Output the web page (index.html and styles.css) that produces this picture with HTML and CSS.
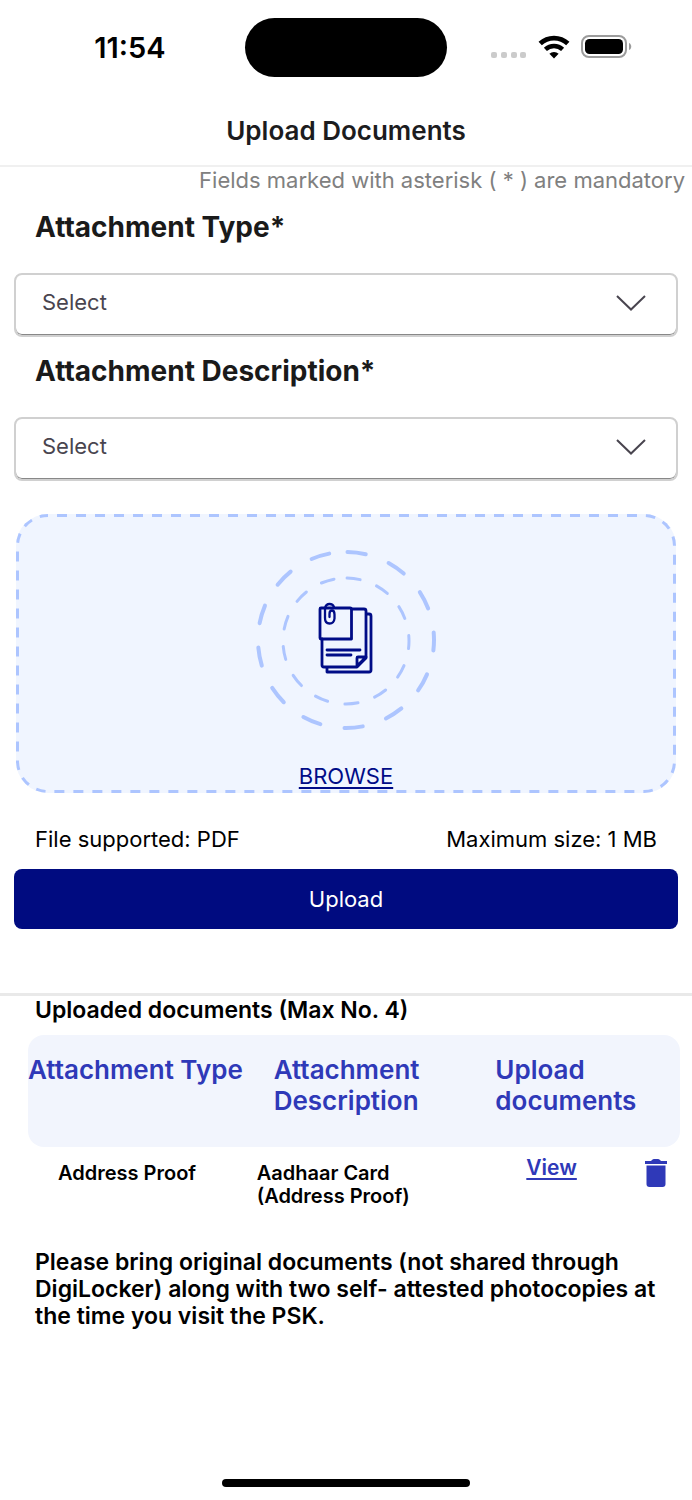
FILE: index.html
```
<!DOCTYPE html>
<html lang="en">
<head>
    <meta charset="UTF-8">
    <meta name="viewport" content="width=device-width, initial-scale=1.0">
    <title>Upload Documents</title>
    <link rel="stylesheet" href="styles.css">
</head>
<body>
    <div class="status-bar">
        <div class="time">11:54</div>
        <div class="island"></div>
        <div class="status-icons">
            <svg class="signal" width="36" height="24" viewBox="0 0 36 24" fill="#cbcbcb">
                <rect x="0" y="17" width="6" height="6" rx="2"/>
                <rect x="10" y="17" width="6" height="6" rx="2"/>
                <rect x="20" y="17" width="6" height="6" rx="2"/>
                <rect x="29" y="17" width="6" height="6" rx="2"/>
            </svg>
            <svg class="wifi" width="32" height="24" viewBox="0 0 32 24">
                <path d="M2.2 8.6a20 20 0 0 1 27.6 0" fill="none" stroke="#000" stroke-width="4.8"/>
                <path d="M7.4 14.4a12.4 12.4 0 0 1 17.2 0" fill="none" stroke="#000" stroke-width="4.4"/>
                <path d="M16 23.4l-4.6-4.6a6.6 6.6 0 0 1 9.2 0z" fill="#000"/>
            </svg>
            <svg class="battery" width="52" height="24" viewBox="0 0 52 24">
                <rect x="1" y="1" width="44" height="21" rx="7" fill="none" stroke="#9c9c9c" stroke-width="2"/>
                <rect x="4" y="4" width="38" height="15" rx="4.500" fill="#000"/>
                <path d="M48 8c3 1 3 6 0 7z" fill="#9c9c9c"/>
            </svg>
        </div>
    </div>

    <header class="header">
        <h1>Upload Documents</h1>
    </header>

    <main>
        <p class="mandatory">Fields marked with asterisk ( * ) are mandatory</p>

        <form class="upload-form">
            <label class="field-label" for="attachmentType">Attachment Type*</label>
            <div class="select-wrap">
                <select id="attachmentType">
                    <option>Select</option>
                </select>
                <svg class="chevron" width="32" height="18" viewBox="0 0 32 18"><path d="M2 2l14 13.500 14-13.500"/></svg>
            </div>

            <label class="field-label" for="attachmentDescription">Attachment Description*</label>
            <div class="select-wrap">
                <select id="attachmentDescription">
                    <option>Select</option>
                </select>
                <svg class="chevron" width="32" height="18" viewBox="0 0 32 18"><path d="M2 2l14 13.500 14-13.500"/></svg>
            </div>

            <div class="dropzone">
                <svg class="dropzone-border" width="100%" height="100%">
                    <rect x="0" y="0" width="100%" height="100%" rx="32"/>
                </svg>
                <svg class="files-icon" width="184" height="184" viewBox="0 0 184 184" fill="none">
                    <g stroke="#adc5ff" stroke-linecap="round">
                        <circle cx="92" cy="92" r="88" pathLength="360" stroke-width="4" stroke-dasharray="12 16" stroke-dashoffset="-1" transform="rotate(-90 92 92)"/>
                        <circle cx="92" cy="93" r="63" pathLength="360" stroke-width="3" stroke-dasharray="12 16" stroke-dashoffset="-1" transform="rotate(-90 92 93)"/>
                    </g>
                    <g stroke="#000c87" stroke-width="2.800" stroke-linecap="round" stroke-linejoin="round">
                        <path d="M98 61h12q2 0 2 2v47l-9 9H70q-2 0-2-2V91"/>
                        <path d="M67 60h29q1.500 0 1.500 2v29H67q-1 0-1-1V61q0-1 1-1z"/>
                        <path d="M113 66h2q2 0 2 2v54q0 2-2 2H73v-4"/>
                        <path d="M103 118v-8q0-1 1-1h8z"/>
                        <path d="M73 102h33M73 107h24"/>
                        <path stroke-width="2.300" d="M80 59q-1-3-4.500-3t-4.500 4v10q0 5.500 4.500 5.500t5-5v-4q0-4-2.500-4t-2.500 3.500v3"/>
                    </g>
                </svg>
                <input class="file-input" type="file" id="file" accept="application/pdf">
                <label class="browse" for="file">BROWSE</label>
            </div>

            <div class="file-info">
                <span>File supported: PDF</span>
                <span>Maximum size: 1 MB</span>
            </div>

            <button class="upload-btn" type="button">Upload</button>
        </form>

        <section class="uploaded">
            <h2>Uploaded documents (Max No. 4)</h2>
            <table>
                <colgroup>
                    <col class="col-type">
                    <col class="col-desc">
                    <col class="col-view">
                    <col class="col-delete">
                </colgroup>
                <thead>
                    <tr>
                        <th>Attachment Type</th>
                        <th>Attachment Description</th>
                        <th colspan="2">Upload documents</th>
                    </tr>
                </thead>
                <tbody>
                    <tr>
                        <td class="doc-type">Address Proof</td>
                        <td class="doc-desc">Aadhaar Card (Address Proof)</td>
                        <td class="doc-view"><a href="#">View</a></td>
                        <td class="doc-delete">
                            <button type="button" aria-label="Delete">
                                <svg width="22" height="28" viewBox="0 0 22 28" fill="#2f39b8">
                                    <path d="M0 2h6l1-1q1-1 2-1h4q1 0 2 1l1 1h6v3H0z"/>
                                    <path d="M1.500 6.500h19V25q0 3-3 3h-13q-3 0-3-3z"/>
                                </svg>
                            </button>
                        </td>
                    </tr>
                </tbody>
            </table>
            <p class="note">Please bring original documents (not shared through DigiLocker) along with two self- attested photocopies at the time you visit the PSK.</p>
        </section>
    </main>

    <div class="home-indicator"></div>
</body>
</html>
```
FILE: styles.css
```
* {
    margin: 0;
    padding: 0;
    box-sizing: border-box;
}

body {
    font-family: Inter, "Liberation Sans", sans-serif;
    font-size: 22px;
    background: #fff;
    color: #000;
    min-height: 100vh;
    display: flex;
    flex-direction: column;
}

button,
select {
    font: inherit;
}

/* Phone status bar */
.status-bar {
    display: grid;
    grid-template-columns: 1fr 202px 1fr;
    align-items: center;
    height: 95px;
}

.time {
    font-size: 29px;
    font-weight: 600;
    text-align: center;
    padding-left: 15px;
}

.island {
    height: 59px;
    border-radius: 30px;
    background: #000;
}

.status-icons {
    display: flex;
    align-items: center;
    padding: 0 0 2px 44px;
}

.wifi {
    margin: 0 11px;
}

.header {
    height: 72px;
    display: flex;
    align-items: center;
    justify-content: center;
    border-bottom: 2px solid #f0f0f0;
}

h1 {
    font-size: 26px;
    font-weight: 600;
    color: #1c1c1e;
}

.mandatory {
    padding: 0 7px;
    line-height: 26px;
    text-align: right;
    color: #808080;
}

/* Form */
.upload-form {
    padding: 0 14px;
}

.field-label {
    display: block;
    padding: 14px 21px 26px;
    font-size: 28px;
    font-weight: 700;
    line-height: 40px;
    color: #1a1a1a;
}

.select-wrap {
    position: relative;
}

.select-wrap select {
    appearance: none;
    display: block;
    width: 100%;
    height: 64px;
    padding: 0 60px 6px 26px;
    border: 2px solid #d0d0d0;
    border-radius: 8px;
    background: #fff;
    box-shadow: inset 0 -1px #888;
    color: #49454f;
}

.chevron {
    position: absolute;
    right: 31px;
    top: 21px;
    fill: none;
    stroke: #49454f;
    stroke-width: 2;
    pointer-events: none;
}

.dropzone {
    position: relative;
    display: flex;
    flex-direction: column;
    align-items: center;
    margin: 33px 2px 0;
    padding: 34px 0 3px;
    border-radius: 32px;
    background: #f0f5ff;
    overflow: hidden;
}

.dropzone-border {
    position: absolute;
    inset: 0;
    fill: none;
    stroke: #adc5ff;
    stroke-width: 6;
    stroke-dasharray: 10 9;
    stroke-dashoffset: -9;
    pointer-events: none;
}

.file-input {
    position: absolute;
    opacity: 0;
    width: 1px;
    height: 1px;
}

.browse {
    margin-top: 30px;
    line-height: 28px;
    color: #000c87;
    text-decoration: underline;
    text-decoration-thickness: 2px;
    text-underline-offset: 3px;
    cursor: pointer;
}

.file-info {
    display: flex;
    justify-content: space-between;
    padding: 32px 21px 16px;
    line-height: 28px;
}

.upload-btn {
    display: block;
    width: 100%;
    height: 60px;
    border: none;
    border-radius: 8px;
    background: #000b80;
    color: #fff;
}

/* Uploaded documents */
.uploaded {
    margin-top: 64px;
    border-top: 3px solid #e9e9e9;
}

h2 {
    padding: 0 35px;
    font-size: 23px;
    font-weight: 600;
    line-height: 28px;
}

table {
    width: calc(100% - 40px);
    margin: 11px 12px 0 28px;
    border-collapse: separate;
    border-spacing: 0;
    table-layout: fixed;
}

.col-type {
    width: 34%;
}

.col-desc {
    width: 34%;
}

.col-view {
    width: 24%;
}

.col-delete {
    width: 8%;
}

th {
    height: 112px;
    padding: 19px 24px 0;
    background: #f2f5fd;
    color: #2f39b8;
    font-size: 26px;
    font-weight: 600;
    line-height: 31px;
    text-align: left;
    vertical-align: top;
}

th:first-child {
    padding-left: 0;
    padding-right: 0;
    border-radius: 16px 0 0 16px;
}

th:last-child {
    border-radius: 0 16px 16px 0;
}

td {
    vertical-align: top;
    padding-top: 15px;
    font-size: 20px;
    font-weight: 600;
    line-height: 23px;
}

.doc-type {
    padding-left: 30px;
}

.doc-desc {
    padding-left: 7px;
    padding-right: 50px;
}

.doc-view {
    padding-top: 9px;
    padding-left: 4px;
    font-size: 21px;
    text-align: center;
}

.doc-view a {
    color: #2f39b8;
    text-decoration-thickness: 2px;
    text-underline-offset: 3px;
}

.doc-delete {
    padding-top: 12px;
    padding-left: 4px;
    text-align: center;
}

.doc-delete button {
    border: none;
    background: none;
    cursor: pointer;
}

.doc-delete svg {
    display: block;
}

.note {
    padding: 41px 35px 0;
    font-size: 23px;
    font-weight: 600;
    line-height: 27px;
}

.home-indicator {
    width: 248px;
    height: 8px;
    margin: auto auto 13px;
    border-radius: 4px;
    background: #000;
}
```
